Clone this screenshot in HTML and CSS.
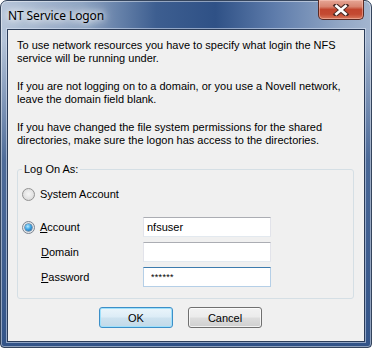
FILE: index.html
```html
<!DOCTYPE html>
<html lang="en">
<head>
    <meta charset="UTF-8">
    <meta name="viewport" content="width=device-width, initial-scale=1.0">
    <title>NT Service Logon</title>
    <link rel="stylesheet" href="styles.css">
</head>
<body>
    <div class="window">
        <div class="titlebar">
            <span class="title">NT Service Logon</span>
            <button class="close" type="button" aria-label="Close">
                <svg width="18" height="12" viewBox="0 0 18 12">
                    <path d="M4 1.5 L14 10.5 M14 1.5 L4 10.5" stroke="#4a2a26" stroke-width="4.6" stroke-linecap="square" fill="none"/>
                    <path d="M4.4 2 L13.6 10 M13.6 2 L4.4 10" stroke="#ffffff" stroke-width="2.6" stroke-linecap="square" fill="none"/>
                </svg>
            </button>
        </div>

        <div class="client">
            <p>To use network resources you have to specify what login the NFS service will be running under.</p>
            <p>If you are not logging on to a domain, or you use a Novell network, leave the domain field blank.</p>
            <p>If you have changed the file system permissions for the shared directories, make sure the logon has access to the directories.</p>

            <!-- Log On As group -->
            <fieldset class="group">
                <legend>Log On As:</legend>
                <div class="group-body">
                    <label class="row row-system">
                        <input class="radio" type="radio" name="logon">
                        <span>System Account</span>
                    </label>
                    <div class="row">
                        <label class="row-label">
                            <input class="radio" type="radio" name="logon" checked>
                            <span><u>A</u>ccount</span>
                        </label>
                        <input class="field" type="text" value="nfsuser">
                    </div>
                    <div class="row">
                        <span class="row-label indent"><u>D</u>omain</span>
                        <input class="field" type="text" value="">
                    </div>
                    <div class="row">
                        <span class="row-label indent"><u>P</u>assword</span>
                        <input class="field field-focus" type="text" value="******">
                    </div>
                </div>
            </fieldset>

            <div class="buttons">
                <button class="btn btn-default" type="button">OK</button>
                <button class="btn" type="button">Cancel</button>
            </div>
        </div>
    </div>
</body>
</html>
```

FILE: styles.css
```css
* {
    margin: 0;
    padding: 0;
    box-sizing: border-box;
}

body {
    width: 372px;
    height: 348px;
    font-family: 'Liberation Sans', Arial, sans-serif;
    font-size: 11px;
    color: #000;
    background: #fff;
}

/* Window frame */
.window {
    width: 372px;
    height: 348px;
    border: 1px solid #34445c;
    border-radius: 7px 7px 4px 4px;
    padding: 28px 6px 5px 6px;
    position: relative;
    background:
        linear-gradient(180deg, rgba(44, 78, 132, 0) 0, rgba(44, 78, 132, 0) 40px, rgba(44, 78, 132, 0.75) 160px, rgba(44, 78, 132, 0.95) 100%),
        linear-gradient(90deg, #b6c5d9 0%, #8ea4c2 22%, #3d5e90 42%, #2f5186 58%, #5e7cab 74%, #93a8c6 92%, #a3b5cf 100%);
    box-shadow: inset 0 0 0 1px rgba(255, 255, 255, 0.45);
}

.titlebar {
    position: absolute;
    top: 0;
    left: 0;
    right: 0;
    height: 28px;
}

.title {
    position: absolute;
    left: 7px;
    top: 7px;
    font-family: 'Noto Sans', sans-serif;
    font-size: 12px;
    line-height: 16px;
    color: #000;
    letter-spacing: -0.1px;
    text-shadow: 0 0 6px #fff, 0 0 10px #fff, 0 0 14px rgba(255, 255, 255, 0.9);
}

.close {
    position: absolute;
    top: -1px;
    right: 7px;
    width: 46px;
    height: 20px;
    border: 1px solid #5a2a24;
    border-top: none;
    border-radius: 0 0 5px 5px;
    background: linear-gradient(180deg, #e6a696 0%, #d88470 35%, #c2452e 50%, #c44a32 75%, #d8785c 100%);
    box-shadow: inset 0 0 0 1px rgba(255, 210, 200, 0.45);
    display: flex;
    align-items: center;
    justify-content: center;
}

/* Client area */
.client {
    height: 100%;
    border: 1px solid #2b3c58;
    background: #f0f0f0;
    padding: 9px 10px 0 9px;
    box-shadow: 0 0 0 1px rgba(220, 230, 245, 0.55);
}

.client p {
    line-height: 13px;
    margin-bottom: 15px;
}

.client p:nth-of-type(3) {
    margin-bottom: 0;
}

/* Group box */
.group {
    margin-top: 16px;
    border: 1px solid #d5dfe5;
    border-radius: 3px;
    padding: 0 0 11px 0;
}

.group legend {
    margin-left: 4px;
    padding: 0 2px;
    line-height: 13px;
}

.group-body {
    padding: 11px 0 0 4px;
}

.row {
    display: flex;
    align-items: center;
    height: 20px;
    margin-top: 5px;
}

.row-system {
    height: 15px;
    margin-top: 0;
    margin-bottom: 15px;
}

.row-label {
    width: 121px;
    display: flex;
    align-items: center;
}

.row-label.indent {
    padding-left: 19px;
}

.radio {
    appearance: none;
    -webkit-appearance: none;
    width: 13px;
    height: 13px;
    border-radius: 50%;
    border: 1px solid #929292;
    background: radial-gradient(circle at 50% 45%, #f6f6f6 0, #e3e3e3 55%, #cfcfcf 100%);
    margin-right: 5px;
    position: relative;
    flex: none;
}

.radio:checked {
    border-color: #7d8590;
    background: radial-gradient(circle at 50% 50%, #f4f4f4 0, #e2e6ea 70%, #c9d2da 100%);
}

.radio:checked::after {
    content: '';
    position: absolute;
    left: 2px;
    top: 2px;
    width: 7px;
    height: 7px;
    border-radius: 50%;
    background: radial-gradient(circle at 40% 35%, #b8ecff 0, #3fa6e6 45%, #11508f 100%);
    box-shadow: 0 0 0 0.5px #1f4f7a;
}

.row span,
.row-label span {
    line-height: 13px;
}

.field {
    width: 128px;
    height: 20px;
    border: 1px solid #e2e3ea;
    border-top-color: #abadb3;
    border-bottom-color: #e3e9ef;
    background: #fff;
    font-family: 'Liberation Sans', Arial, sans-serif;
    font-size: 11px;
    padding: 0 3px;
    color: #000;
    outline: none;
}

.field-focus {
    border-color: #b5cfe7;
    border-top-color: #3d7bad;
    font-size: 9px;
    padding-left: 7px;
    letter-spacing: 0.3px;
}

/* Buttons */
.buttons {
    display: flex;
    gap: 15px;
    margin-top: 8px;
    padding-left: 82px;
}

.btn {
    width: 74px;
    height: 21px;
    border: 1px solid #707070;
    border-radius: 3px;
    font-family: 'Liberation Sans', Arial, sans-serif;
    font-size: 11px;
    color: #000;
    background: linear-gradient(180deg, #f2f2f2 0%, #ebebeb 48%, #dddddd 52%, #cfcfcf 100%);
    box-shadow: inset 0 0 0 1px rgba(255, 255, 255, 0.7);
}

.btn-default {
    border-color: #3c8fc8;
    background: linear-gradient(180deg, #eaf5fb 0%, #dcecf6 48%, #cde2ef 52%, #c2d9e8 100%);
    box-shadow: inset 0 0 0 1px #9fe0fb;
}
```
